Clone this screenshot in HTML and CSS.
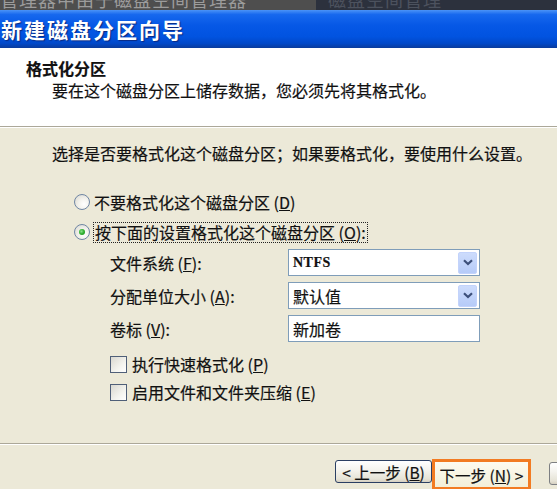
FILE: index.html
```html
<!DOCTYPE html>
<html lang="zh-CN">
<head>
<meta charset="utf-8">
<title>新建磁盘分区向导</title>
<link rel="stylesheet" href="styles.css">
</head>
<body>
<div class="window">
  <div class="top-strip">
    <div class="strip-left"><div class="strip-text">管理器中由于磁盘空间管理器</div></div>
    <div class="strip-right"><div class="strip-text dim">磁盘空间管理</div></div>
  </div>
  <div class="titlebar">新建磁盘分区向导</div>
  <div class="header">
    <div class="h-title">格式化分区</div>
    <div class="h-sub">要在这个磁盘分区上储存数据，您必须先将其格式化。</div>
  </div>
  <div class="content">
    <div class="intro">选择是否要格式化这个磁盘分区；如果要格式化，要使用什么设置。</div>
    <div class="radios">
      <div class="radio-row"><span class="radio"></span><span>不要格式化这个磁盘分区 (<u>D</u>)</span></div>
      <div class="radio-row second"><span class="radio checked"></span><span class="focus">按下面的设置格式化这个磁盘分区 (<u>O</u>):</span></div>
    </div>
    <div class="form">
      <div class="label">文件系统 (<u>F</u>):</div>
      <div class="combo"><span class="value latin">NTFS</span><span class="drop"><svg width="10" height="7" viewBox="0 0 10 7"><path d="M1 1.2 L5 5 L9 1.2" fill="none" stroke="#3c4f7a" stroke-width="2.2"/></svg></span></div>
      <div class="label">分配单位大小 (<u>A</u>):</div>
      <div class="combo"><span class="value">默认值</span><span class="drop"><svg width="10" height="7" viewBox="0 0 10 7"><path d="M1 1.2 L5 5 L9 1.2" fill="none" stroke="#3c4f7a" stroke-width="2.2"/></svg></span></div>
      <div class="label">卷标 (<u>V</u>):</div>
      <div class="combo text"><span class="value">新加卷</span></div>
    </div>
    <div class="checks">
      <div class="check-row"><span class="checkbox"></span><span>执行快速格式化 (<u>P</u>)</span></div>
      <div class="check-row second"><span class="checkbox"></span><span>启用文件和文件夹压缩 (<u>E</u>)</span></div>
    </div>
  </div>
  <div class="footer">
    <div class="btn back">&lt; 上一步 (<u>B</u>)</div>
    <div class="highlight"><div class="btn next">下一步 (<u>N</u>) &gt;</div></div>
    <div class="btn cancel"></div>
  </div>
</div>
</body>
</html>
```
FILE: styles.css
```css
html, body {
  margin: 0;
  padding: 0;
}
body {
  width: 557px;
  height: 489px;
  overflow: hidden;
  font-family: "Noto Sans CJK SC", "Noto Sans", sans-serif;
  font-size: 16px;
  color: #111;
  background: #ece9d8;
  -webkit-text-stroke: 0.2px #111;
}
.window {
  display: flex;
  flex-direction: column;
  height: 489px;
}
.top-strip {
  height: 10px;
  display: flex;
  overflow: hidden;
  flex: none;
  -webkit-text-stroke: 0;
}
.strip-left {
  width: 316px;
  background: #4e4e4e;
  overflow: hidden;
}
.strip-right {
  flex: 1;
  background: #2c313d;
  overflow: hidden;
  padding-left: 12px;
}
.strip-text {
  font-size: 18px;
  line-height: 18px;
  margin-top: -10px;
  color: #9c9c9c;
  white-space: nowrap;
  letter-spacing: 1px;
}
.strip-text.dim {
  color: #4c525e;
}
.titlebar {
  flex: none;
  height: 38px;
  display: flex;
  align-items: center;
  padding-left: 1px;
  color: #fff;
  font-size: 21px;
  font-weight: 700;
  letter-spacing: 2px;
  -webkit-text-stroke: 0;
  text-shadow: 1px 1px 1px #0b2a80;
  background: linear-gradient(#4b93f7 0, #1768ee 12%, #0658e6 40%, #0153e0 70%, #0148c8 88%, #0a3b9c 100%);
}
.header {
  flex: none;
  height: 79px;
  box-sizing: border-box;
  background: #fff;
  padding: 10px 0 0 26px;
  border-bottom: 1px solid #aca899;
}
.h-title {
  font-weight: 700;
  line-height: 20px;
}
.h-sub {
  margin-top: 2px;
  padding-left: 26px;
  line-height: 20px;
}
.content {
  flex: 1;
  padding: 15px 0 0 52px;
  border-top: 1px solid #fff;
}
.intro {
  line-height: 20px;
}
.radios {
  margin-top: 29px;
  margin-left: 22px;
}
.radio-row {
  display: flex;
  align-items: center;
  gap: 4px;
  height: 20px;
  line-height: 20px;
}
.radio-row.second {
  margin-top: 10px;
}
.radio {
  width: 14px;
  height: 14px;
  border: 1px solid #6f86a4;
  border-radius: 50%;
  background: radial-gradient(circle at 65% 65%, #ffffff 0, #f4f3ee 40%, #d7d5cc 100%);
  display: flex;
  align-items: center;
  justify-content: center;
  flex: none;
}
.radio.checked::after {
  content: "";
  width: 6px;
  height: 6px;
  border-radius: 50%;
  background: radial-gradient(circle at 40% 40%, #8be08b 0, #30b030 50%, #1a8a1a 100%);
}
.focus {
  outline: 1px dotted #222;
  outline-offset: 0;
  padding: 0 1px;
  line-height: 19px;
}
.form {
  margin-top: 7px;
  margin-left: 58px;
  display: grid;
  grid-template-columns: 178px 192px;
  grid-auto-rows: 27px;
  row-gap: 6px;
  align-items: center;
}
.label {
  line-height: 20px;
}
.combo {
  height: 27px;
  box-sizing: border-box;
  border: 1px solid #7f9db9;
  background: #fff;
  display: flex;
  align-items: center;
  padding: 1px 1px 1px 4px;
}
.combo .value {
  flex: 1;
  line-height: 20px;
}
.combo .latin {
  font-family: "Liberation Serif", serif;
  font-weight: 700;
  font-size: 14px;
  letter-spacing: 0.5px;
}
.drop {
  width: 19px;
  height: 22px;
  box-sizing: border-box;
  border: 1px solid #c3d3fb;
  border-radius: 2px;
  background: linear-gradient(#cddcfc, #b6cbf8);
  display: flex;
  align-items: center;
  justify-content: center;
  margin-right: 1px;
}
.checks {
  margin-top: 12px;
  margin-left: 58px;
}
.check-row {
  display: flex;
  align-items: center;
  gap: 5px;
  height: 20px;
  line-height: 20px;
}
.check-row.second {
  margin-top: 8px;
}
.checkbox {
  width: 17px;
  height: 17px;
  box-sizing: border-box;
  border: 1px solid #4f5f78;
  background: linear-gradient(135deg, #d9d8d0 0, #f3f3ee 60%, #ffffff 100%);
  flex: none;
}
.footer {
  flex: none;
  height: 46px;
  box-sizing: border-box;
  border-top: 1px solid #aca899;
  box-shadow: inset 0 1px 0 #fff;
  padding: 15px 0 0 335px;
  display: flex;
  align-items: flex-start;
  overflow: hidden;
}
.btn {
  height: 23px;
  box-sizing: border-box;
  border: 1px solid #2b3f63;
  border-radius: 3px;
  background: linear-gradient(#ffffff 0, #f5f4ef 40%, #e6e3d6 85%, #d6d0c2 100%);
  display: flex;
  align-items: center;
  justify-content: center;
  font-size: 15.5px;
  line-height: 20px;
  white-space: nowrap;
  flex: none;
}
.back {
  width: 97px;
  margin-top: 1px;
}
.highlight {
  width: 99px;
  height: 31px;
  box-sizing: border-box;
  border: 3px solid #f27b22;
  flex: none;
  display: flex;
  align-items: flex-start;
}
.next {
  width: 93px;
  height: 25px;
  border: none;
  border-radius: 0;
  background: linear-gradient(#fdfbf0, #f2eed8);
}
.cancel {
  margin-left: 18px;
  margin-top: 3px;
  width: 75px;
  border-color: #7d7f82;
}
```
